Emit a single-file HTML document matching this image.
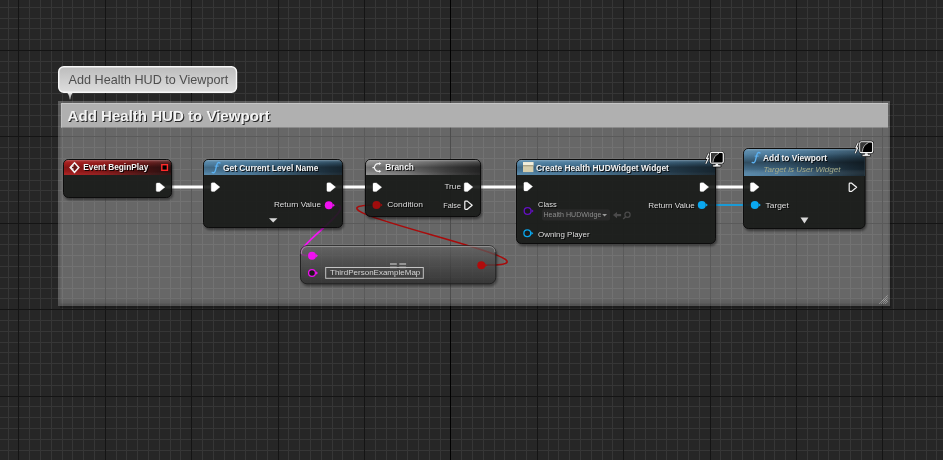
<!DOCTYPE html><html><head><meta charset="utf-8"><style>
html,body{margin:0;padding:0;width:943px;height:460px;overflow:hidden;background:#262626}
body{position:relative;font-family:"Liberation Sans",sans-serif}
svg text{font-family:"Liberation Sans",sans-serif;white-space:pre}
</style></head><body><svg width="943" height="460" style="position:absolute;left:0;top:0" shape-rendering="crispEdges"><rect width="943" height="460" fill="#262626"/><path d="M8 0h1V460h-1Z M29 0h1V460h-1Z M40 0h1V460h-1Z M51 0h1V460h-1Z M62 0h1V460h-1Z M72 0h1V460h-1Z M83 0h1V460h-1Z M94 0h1V460h-1Z M116 0h1V460h-1Z M126 0h1V460h-1Z M137 0h1V460h-1Z M148 0h1V460h-1Z M159 0h1V460h-1Z M170 0h1V460h-1Z M180 0h1V460h-1Z M202 0h1V460h-1Z M213 0h1V460h-1Z M224 0h1V460h-1Z M234 0h1V460h-1Z M245 0h1V460h-1Z M256 0h1V460h-1Z M267 0h1V460h-1Z M288 0h1V460h-1Z M299 0h1V460h-1Z M310 0h1V460h-1Z M321 0h1V460h-1Z M332 0h1V460h-1Z M342 0h1V460h-1Z M353 0h1V460h-1Z M375 0h1V460h-1Z M386 0h1V460h-1Z M396 0h1V460h-1Z M407 0h1V460h-1Z M418 0h1V460h-1Z M429 0h1V460h-1Z M440 0h1V460h-1Z M461 0h1V460h-1Z M472 0h1V460h-1Z M483 0h1V460h-1Z M494 0h1V460h-1Z M504 0h1V460h-1Z M515 0h1V460h-1Z M526 0h1V460h-1Z M548 0h1V460h-1Z M558 0h1V460h-1Z M569 0h1V460h-1Z M580 0h1V460h-1Z M591 0h1V460h-1Z M602 0h1V460h-1Z M612 0h1V460h-1Z M634 0h1V460h-1Z M645 0h1V460h-1Z M656 0h1V460h-1Z M666 0h1V460h-1Z M677 0h1V460h-1Z M688 0h1V460h-1Z M699 0h1V460h-1Z M720 0h1V460h-1Z M731 0h1V460h-1Z M742 0h1V460h-1Z M753 0h1V460h-1Z M764 0h1V460h-1Z M774 0h1V460h-1Z M785 0h1V460h-1Z M807 0h1V460h-1Z M818 0h1V460h-1Z M828 0h1V460h-1Z M839 0h1V460h-1Z M850 0h1V460h-1Z M861 0h1V460h-1Z M872 0h1V460h-1Z M893 0h1V460h-1Z M904 0h1V460h-1Z M915 0h1V460h-1Z M926 0h1V460h-1Z M936 0h1V460h-1Z M0 7H943v1H0Z M0 18H943v1H0Z M0 28H943v1H0Z M0 39H943v1H0Z M0 61H943v1H0Z M0 72H943v1H0Z M0 82H943v1H0Z M0 93H943v1H0Z M0 104H943v1H0Z M0 115H943v1H0Z M0 126H943v1H0Z M0 147H943v1H0Z M0 158H943v1H0Z M0 169H943v1H0Z M0 180H943v1H0Z M0 190H943v1H0Z M0 201H943v1H0Z M0 212H943v1H0Z M0 234H943v1H0Z M0 244H943v1H0Z M0 255H943v1H0Z M0 266H943v1H0Z M0 277H943v1H0Z M0 288H943v1H0Z M0 298H943v1H0Z M0 320H943v1H0Z M0 331H943v1H0Z M0 342H943v1H0Z M0 352H943v1H0Z M0 363H943v1H0Z M0 374H943v1H0Z M0 385H943v1H0Z M0 406H943v1H0Z M0 417H943v1H0Z M0 428H943v1H0Z M0 439H943v1H0Z M0 450H943v1H0Z" fill="#363636"/><path d="M18 0h1V460h-1Z M105 0h1V460h-1Z M191 0h1V460h-1Z M278 0h1V460h-1Z M364 0h1V460h-1Z M537 0h1V460h-1Z M623 0h1V460h-1Z M710 0h1V460h-1Z M796 0h1V460h-1Z M882 0h1V460h-1Z M0 50H943v1H0Z M0 136H943v1H0Z M0 223H943v1H0Z M0 309H943v1H0Z M0 396H943v1H0Z" fill="#141414"/><path d="M450 0h1V460h-1Z" fill="#000000"/></svg><svg width="943" height="460" style="position:absolute;left:0;top:0;will-change:transform"><defs>
<filter id="nsh" color-interpolation-filters="sRGB" x="-10%" y="-10%" width="130%" height="140%"><feGaussianBlur in="SourceAlpha" stdDeviation="1.2"/><feOffset dx="1" dy="1.5"/><feComponentTransfer><feFuncA type="linear" slope="0.5"/></feComponentTransfer><feMerge><feMergeNode/><feMergeNode in="SourceGraphic"/></feMerge></filter>
<filter id="tsh" color-interpolation-filters="sRGB" x="-5%" y="-30%" width="110%" height="160%"><feOffset dx="0.9" dy="0.9" in="SourceAlpha"/><feGaussianBlur stdDeviation="0.3"/><feComponentTransfer><feFuncA type="linear" slope="0.8"/></feComponentTransfer><feMerge><feMergeNode/><feMergeNode in="SourceGraphic"/></feMerge></filter>
<linearGradient id="gEv" x1="0" x2="1" y1="0" y2="0"><stop offset="0" stop-color="#aa1d1d"/><stop offset="0.55" stop-color="#951c1c"/><stop offset="1" stop-color="#6a2a2a"/></linearGradient>
<linearGradient id="gFn" x1="0" x2="1" y1="0" y2="0"><stop offset="0" stop-color="#5487aa"/><stop offset="0.55" stop-color="#4a7a9c"/><stop offset="1" stop-color="#3a5f78"/></linearGradient>
<linearGradient id="gBr" x1="0" x2="1" y1="0" y2="0"><stop offset="0" stop-color="#909090"/><stop offset="0.55" stop-color="#7a7a7a"/><stop offset="1" stop-color="#5a5a5a"/></linearGradient>
<linearGradient id="gDark" x1="0" x2="1" y1="0" y2="0"><stop offset="0" stop-color="#000" stop-opacity="0"/><stop offset="0.35" stop-color="#000" stop-opacity="0.08"/><stop offset="0.7" stop-color="#000" stop-opacity="0.4"/><stop offset="1" stop-color="#000" stop-opacity="0.62"/></linearGradient>
<linearGradient id="gVm" x1="0" x2="0" y1="0" y2="1"><stop offset="0" stop-color="#fff" stop-opacity="0.15"/><stop offset="0.45" stop-color="#fff" stop-opacity="0.8"/><stop offset="1" stop-color="#fff" stop-opacity="1"/></linearGradient>
<mask id="mV" maskContentUnits="objectBoundingBox"><rect width="1" height="1" fill="url(#gVm)"/></mask>
<linearGradient id="gGloss" x1="0" x2="0" y1="0" y2="1"><stop offset="0" stop-color="#fff" stop-opacity="0.3"/><stop offset="0.1" stop-color="#fff" stop-opacity="0.08"/><stop offset="0.25" stop-color="#000" stop-opacity="0.02"/><stop offset="0.5" stop-color="#000" stop-opacity="0.22"/><stop offset="0.8" stop-color="#000" stop-opacity="0.08"/><stop offset="1" stop-color="#fff" stop-opacity="0.03"/></linearGradient>
<linearGradient id="gGloss2" x1="0" x2="0" y1="0" y2="1"><stop offset="0" stop-color="#fff" stop-opacity="0.25"/><stop offset="0.08" stop-color="#fff" stop-opacity="0.05"/><stop offset="0.25" stop-color="#000" stop-opacity="0.1"/><stop offset="0.5" stop-color="#000" stop-opacity="0.42"/><stop offset="0.75" stop-color="#000" stop-opacity="0.2"/><stop offset="1" stop-color="#fff" stop-opacity="0.02"/></linearGradient>
<linearGradient id="gEq" x1="0" x2="0" y1="0" y2="1"><stop offset="0" stop-color="#767676" stop-opacity="0.6"/><stop offset="0.45" stop-color="#525252" stop-opacity="0.62"/><stop offset="1" stop-color="#303030" stop-opacity="0.68"/></linearGradient>
<linearGradient id="gTip" x1="0" x2="0" y1="0" y2="1"><stop offset="0" stop-color="#bcbcbc"/><stop offset="1" stop-color="#dedede"/></linearGradient>
<linearGradient id="gCb" x1="0" x2="0" y1="0" y2="1"><stop offset="0" stop-color="#000" stop-opacity="0"/><stop offset="1" stop-color="#000" stop-opacity="0.12"/></linearGradient>
<linearGradient id="gPtr" x1="0" x2="0" y1="0" y2="1"><stop offset="0" stop-color="#f0f0f0"/><stop offset="1" stop-color="#8a8a8a"/></linearGradient>
</defs><path d="M60 306 H890 V103 H891.5 V308 H60 Z" fill="#000" fill-opacity="0.22"/><rect x="58" y="101" width="832" height="205" fill="#fff" fill-opacity="0.25"/><rect x="60.5" y="103" width="828" height="200.5" fill="#fff" fill-opacity="0.07"/><rect x="58" y="296" width="832" height="10" fill="url(#gCb)"/><rect x="61" y="103" width="827" height="24.5" fill="#b0b0b0"/><rect x="61" y="103" width="827" height="1" fill="#c6c6c6"/><rect x="61" y="103" width="1" height="24.5" fill="#c0c0c0"/><text x="67.60" y="121.00" font-size="14.8" font-weight="bold" font-style="normal" textLength="202.12" lengthAdjust="spacingAndGlyphs" fill="#f4f4f4" filter="url(#tsh)">Add Health HUD to Viewport</text><path d="M879.5 303.5L887.5 295.5M881.5 303.5L887.5 297.5M883.5 303.5L887.5 299.5M885.5 303.5L887.5 301.5" stroke="#c4c4c4" stroke-width="0.9" stroke-dasharray="1.1 0.7"/><rect x="58.7" y="66.7" width="177.8" height="25.6" rx="5" fill="url(#gTip)" stroke="#f8f8f8" stroke-width="1.4"/><path d="M66 92.6 Q69 93 69.6 99.4 H70.4 Q71 93 74 92.6 Z" fill="url(#gPtr)"/><text x="68.60" y="83.80" font-size="12.1" font-weight="normal" font-style="normal" textLength="159.60" lengthAdjust="spacingAndGlyphs" fill="#4e4e4e" >Add Health HUD to Viewport</text><path d="M164 187 H211" stroke="#fff" stroke-width="3" fill="none" stroke-opacity="1"/><path d="M335 187 H373" stroke="#fff" stroke-width="3" fill="none" stroke-opacity="1"/><path d="M472 187 H524" stroke="#fff" stroke-width="3" fill="none" stroke-opacity="1"/><path d="M708 187 H751" stroke="#fff" stroke-width="3" fill="none" stroke-opacity="1"/><path d="M707 205 H751" stroke="#1a9ad6" stroke-width="2" fill="none" stroke-opacity="1"/><path d="M334 205 C 364 205, 277.5 255.6, 307.5 255.6" stroke="#f414f4" stroke-width="1.8" fill="none" stroke-opacity="1"/><path d="M487 265 C 587 265, 277 205, 377 205" stroke="#a80b0b" stroke-width="1.6" fill="none" stroke-opacity="1"/><rect x="63.5" y="159.5" width="108.0" height="38.0" rx="5" fill="#1a1c1a" fill-opacity="0.86" stroke="#0c0c0c" stroke-width="1" filter="url(#nsh)"/><path d="M64.0 175 V164.5 Q64.0 160.0 68.5 160.0 H166.5 Q171.0 160.0 171.0 164.5 V175 Z" fill="url(#gEv)"/><path d="M64.0 175 V164.5 Q64.0 160.0 68.5 160.0 H166.5 Q171.0 160.0 171.0 164.5 V175 Z" fill="url(#gDark)" mask="url(#mV)"/><path d="M64.0 175 V164.5 Q64.0 160.0 68.5 160.0 H166.5 Q171.0 160.0 171.0 164.5 V175 Z" fill="url(#gGloss)"/><rect x="203.5" y="159.5" width="139.0" height="68.0" rx="5" fill="#1a1c1a" fill-opacity="0.86" stroke="#0c0c0c" stroke-width="1" filter="url(#nsh)"/><path d="M204.0 175 V164.5 Q204.0 160.0 208.5 160.0 H337.5 Q342.0 160.0 342.0 164.5 V175 Z" fill="url(#gFn)"/><path d="M204.0 175 V164.5 Q204.0 160.0 208.5 160.0 H337.5 Q342.0 160.0 342.0 164.5 V175 Z" fill="url(#gDark)" mask="url(#mV)"/><path d="M204.0 175 V164.5 Q204.0 160.0 208.5 160.0 H337.5 Q342.0 160.0 342.0 164.5 V175 Z" fill="url(#gGloss)"/><rect x="365.5" y="159.5" width="115.0" height="57.0" rx="5" fill="#1a1c1a" fill-opacity="0.86" stroke="#0c0c0c" stroke-width="1" filter="url(#nsh)"/><path d="M366.0 175 V164.5 Q366.0 160.0 370.5 160.0 H475.5 Q480.0 160.0 480.0 164.5 V175 Z" fill="url(#gBr)"/><path d="M366.0 175 V164.5 Q366.0 160.0 370.5 160.0 H475.5 Q480.0 160.0 480.0 164.5 V175 Z" fill="url(#gDark)" mask="url(#mV)"/><path d="M366.0 175 V164.5 Q366.0 160.0 370.5 160.0 H475.5 Q480.0 160.0 480.0 164.5 V175 Z" fill="url(#gGloss)"/><rect x="516.5" y="159.5" width="199.0" height="84.0" rx="5" fill="#1a1c1a" fill-opacity="0.86" stroke="#0c0c0c" stroke-width="1" filter="url(#nsh)"/><path d="M517.0 175 V164.5 Q517.0 160.0 521.5 160.0 H710.5 Q715.0 160.0 715.0 164.5 V175 Z" fill="url(#gFn)"/><path d="M517.0 175 V164.5 Q517.0 160.0 521.5 160.0 H710.5 Q715.0 160.0 715.0 164.5 V175 Z" fill="url(#gDark)" mask="url(#mV)"/><path d="M517.0 175 V164.5 Q517.0 160.0 521.5 160.0 H710.5 Q715.0 160.0 715.0 164.5 V175 Z" fill="url(#gGloss)"/><rect x="743.5" y="148.5" width="121.5" height="80.0" rx="5" fill="#1a1c1a" fill-opacity="0.86" stroke="#0c0c0c" stroke-width="1" filter="url(#nsh)"/><path d="M744.0 176 V153.5 Q744.0 149.0 748.5 149.0 H860 Q864.5 149.0 864.5 153.5 V176 Z" fill="url(#gFn)"/><path d="M744.0 176 V153.5 Q744.0 149.0 748.5 149.0 H860 Q864.5 149.0 864.5 153.5 V176 Z" fill="url(#gDark)" mask="url(#mV)"/><path d="M744.0 176 V153.5 Q744.0 149.0 748.5 149.0 H860 Q864.5 149.0 864.5 153.5 V176 Z" fill="url(#gGloss2)"/><rect x="300.5" y="245.8" width="195.3" height="38" rx="6.5" fill="url(#gEq)" stroke="#222" stroke-width="1" filter="url(#nsh)"/><path d="M301.2 254 Q301.2 246.5 307.5 246.5 H489 Q495 246.5 495 252" fill="none" stroke="#c0c0c0" stroke-opacity="0.55" stroke-width="1"/><text x="83.30" y="170.30" font-size="9.4" font-weight="bold" font-style="normal" textLength="65.01" lengthAdjust="spacingAndGlyphs" fill="#f2f2f2" filter="url(#tsh)">Event BeginPlay</text><text x="223.00" y="170.50" font-size="9.4" font-weight="bold" font-style="normal" textLength="95.38" lengthAdjust="spacingAndGlyphs" fill="#f2f2f2" filter="url(#tsh)">Get Current Level Name</text><text x="385.20" y="170.40" font-size="9.4" font-weight="bold" font-style="normal" textLength="28.70" lengthAdjust="spacingAndGlyphs" fill="#f2f2f2" filter="url(#tsh)">Branch</text><text x="536.00" y="170.50" font-size="9.4" font-weight="bold" font-style="normal" textLength="132.92" lengthAdjust="spacingAndGlyphs" fill="#f2f2f2" filter="url(#tsh)">Create Health HUDWidget Widget</text><text x="763.00" y="160.90" font-size="9.4" font-weight="bold" font-style="normal" textLength="63.98" lengthAdjust="spacingAndGlyphs" fill="#f2f2f2" filter="url(#tsh)">Add to Viewport</text><text x="763.40" y="171.60" font-size="7.2" font-weight="normal" font-style="italic" textLength="77.11" lengthAdjust="spacingAndGlyphs" fill="#a8ae8c" >Target is User Widget</text><text x="273.90" y="207.00" font-size="7.2" font-weight="normal" font-style="normal" textLength="47.08" lengthAdjust="spacingAndGlyphs" fill="#dedede" filter="url(#tsh)">Return Value</text><text x="387.20" y="207.20" font-size="7.2" font-weight="normal" font-style="normal" textLength="35.80" lengthAdjust="spacingAndGlyphs" fill="#dedede" filter="url(#tsh)">Condition</text><text x="444.40" y="188.90" font-size="7.2" font-weight="normal" font-style="normal" textLength="16.59" lengthAdjust="spacingAndGlyphs" fill="#dedede" filter="url(#tsh)">True</text><text x="443.20" y="208.00" font-size="7.2" font-weight="normal" font-style="normal" textLength="17.80" lengthAdjust="spacingAndGlyphs" fill="#dedede" filter="url(#tsh)">False</text><text x="538.00" y="207.00" font-size="7.2" font-weight="normal" font-style="normal" textLength="18.70" lengthAdjust="spacingAndGlyphs" fill="#dedede" filter="url(#tsh)">Class</text><text x="648.20" y="207.50" font-size="7.2" font-weight="normal" font-style="normal" textLength="46.58" lengthAdjust="spacingAndGlyphs" fill="#dedede" filter="url(#tsh)">Return Value</text><text x="538.00" y="236.50" font-size="7.2" font-weight="normal" font-style="normal" textLength="51.59" lengthAdjust="spacingAndGlyphs" fill="#dedede" filter="url(#tsh)">Owning Player</text><text x="765.60" y="208.00" font-size="7.2" font-weight="normal" font-style="normal" textLength="23.19" lengthAdjust="spacingAndGlyphs" fill="#dedede" filter="url(#tsh)">Target</text><path d="M157.2 182.9 H159.6 L164.89999999999998 187.20000000000002 L159.6 191.5 H157.2 Q156.2 191.5 156.2 190.5 V183.9 Q156.2 182.9 157.2 182.9 Z" fill="#fff" stroke="#fff" stroke-width="0.3" stroke-linejoin="round"/><path d="M212.2 182.8 H214.6 L219.89999999999998 187.10000000000002 L214.6 191.4 H212.2 Q211.2 191.4 211.2 190.4 V183.8 Q211.2 182.8 212.2 182.8 Z" fill="#fff" stroke="#fff" stroke-width="0.3" stroke-linejoin="round"/><path d="M327.9 182.8 H330.29999999999995 L335.59999999999997 187.10000000000002 L330.29999999999995 191.4 H327.9 Q326.9 191.4 326.9 190.4 V183.8 Q326.9 182.8 327.9 182.8 Z" fill="#fff" stroke="#fff" stroke-width="0.3" stroke-linejoin="round"/><path d="M374 182.9 H376.4 L381.7 187.20000000000002 L376.4 191.5 H374 Q373 191.5 373 190.5 V183.9 Q373 182.9 374 182.9 Z" fill="#fff" stroke="#fff" stroke-width="0.3" stroke-linejoin="round"/><path d="M465.2 182.8 H467.59999999999997 L472.9 187.10000000000002 L467.59999999999997 191.4 H465.2 Q464.2 191.4 464.2 190.4 V183.8 Q464.2 182.8 465.2 182.8 Z" fill="#fff" stroke="#fff" stroke-width="0.3" stroke-linejoin="round"/><path d="M465.5 201.1 H467.29999999999995 L472.2 205.2 L467.29999999999995 209.3 H465.5 Q464.8 209.3 464.8 208.6 V201.8 Q464.8 201.1 465.5 201.1 Z" fill="none" stroke="#f4f4f4" stroke-width="1.2" stroke-linejoin="round"/><path d="M524.9 182.3 H527.3 L532.6 186.60000000000002 L527.3 190.9 H524.9 Q523.9 190.9 523.9 189.9 V183.3 Q523.9 182.3 524.9 182.3 Z" fill="#fff" stroke="#fff" stroke-width="0.3" stroke-linejoin="round"/><path d="M701 182.8 H703.4 L708.7 187.10000000000002 L703.4 191.4 H701 Q700 191.4 700 190.4 V183.8 Q700 182.8 701 182.8 Z" fill="#fff" stroke="#fff" stroke-width="0.3" stroke-linejoin="round"/><path d="M751.4 182.8 H753.8 L759.1 187.10000000000002 L753.8 191.4 H751.4 Q750.4 191.4 750.4 190.4 V183.8 Q750.4 182.8 751.4 182.8 Z" fill="#fff" stroke="#fff" stroke-width="0.3" stroke-linejoin="round"/><path d="M849.9 183.2 H851.7 L856.6 187.29999999999998 L851.7 191.4 H849.9 Q849.2 191.4 849.2 190.7 V183.9 Q849.2 183.2 849.9 183.2 Z" fill="none" stroke="#f4f4f4" stroke-width="1.2" stroke-linejoin="round"/><circle cx="328.8" cy="205.3" r="4" fill="#f010f0"/><path d="M332.8 203.5 L334.8 205.3 L332.8 207.10000000000002 Z" fill="#f010f0"/><circle cx="376.5" cy="205" r="4" fill="#a00d0d"/><path d="M380.5 203.2 L382.5 205 L380.5 206.8 Z" fill="#a00d0d"/><circle cx="701.8" cy="205" r="4" fill="#0aa8f0"/><path d="M705.8 203.2 L707.8 205 L705.8 206.8 Z" fill="#0aa8f0"/><circle cx="754.8" cy="205" r="4" fill="#0aa8f0"/><path d="M758.8 203.2 L760.8 205 L758.8 206.8 Z" fill="#0aa8f0"/><circle cx="527.6" cy="211" r="3.4" fill="#1a1a1a" stroke="#6410c4" stroke-width="1.3"/><path d="M531.6 209.2 L533.6 211 L531.6 212.8 Z" fill="#6410c4"/><circle cx="527.3" cy="233.3" r="3.4" fill="#1a1a1a" stroke="#0aa8f0" stroke-width="1.3"/><path d="M531.3 231.5 L533.3 233.3 L531.3 235.10000000000002 Z" fill="#0aa8f0"/><circle cx="312" cy="255.7" r="4" fill="#f010f0"/><path d="M316 253.89999999999998 L318 255.7 L316 257.5 Z" fill="#f010f0"/><circle cx="312" cy="273" r="3.4" fill="#1a1a1a" stroke="#f010f0" stroke-width="1.3"/><path d="M316 271.2 L318 273 L316 274.8 Z" fill="#f010f0"/><circle cx="481.3" cy="265.2" r="4" fill="#b00c0c"/><path d="M485.3 263.4 L487.3 265.2 L485.3 267.0 Z" fill="#b00c0c"/><rect x="161.8" y="164.7" width="5.6" height="5.6" fill="#000" stroke="#ff2a2a" stroke-width="1.4"/><path d="M269 218.2 H277.4 L273.2 222.4 Z" fill="#d8d8d8"/><path d="M800.5 217.6 H808.4 L804.45 223.4 Z" fill="#d8d8d8"/><path d="M74.5 162.8 L78.8 167.5 L74.5 172.3 L70.2 167.5 Z" fill="#6a1414" stroke="#f4f4f4" stroke-width="1.5" stroke-linejoin="miter"/><path d="M70.8 167.5 L73.4 164.6 V170.4 Z" fill="#f4f4f4"/><path d="M72 166.7 H74 V165.2 L76.6 167.5 L74 169.8 V168.3 H72 Z" fill="#6a1414"/><path d="M220 163.0 C 218.8 161.89999999999998, 217.4 162.6, 216.9 164.6 L 215.3 170.79999999999998 C 214.8 172.6, 213.4 173.2, 212.2 172.39999999999998" fill="none" stroke="#5cb2f2" stroke-width="1.35" stroke-linecap="round"/><path d="M214.7 166.1 H218.6" stroke="#5cb2f2" stroke-width="1"/><path d="M760 153.0 C 758.8 151.89999999999998, 757.4 152.6, 756.9 154.6 L 755.3 160.79999999999998 C 754.8 162.6, 753.4 163.2, 752.2 162.39999999999998" fill="none" stroke="#5cb2f2" stroke-width="1.35" stroke-linecap="round"/><path d="M754.7 156.1 H758.6" stroke="#5cb2f2" stroke-width="1"/><path d="M372.4 167.5 H374.2 Q375.4 163.6 378.2 163.6 H379.6 M374.2 167.5 Q375.4 171.3 378.2 171.3 H379.6" fill="none" stroke="#f2f2f2" stroke-width="1.25" stroke-linejoin="round"/><path d="M379 162.2 L381.4 163.6 L379 165 Z M379 169.9 L381.4 171.3 L379 172.7 Z" fill="#f2f2f2"/><rect x="523" y="162.1" width="10.4" height="10" fill="#d6ceac"/><rect x="523" y="162.1" width="10.4" height="3.3" fill="#f2eedc"/><rect x="523" y="165.4" width="10.4" height="0.8" fill="#8a8468"/><path d="M708.9 153.4 L706.5 158.4 L708.3 158.4 L705.8 163.8" fill="none" stroke="#000" stroke-opacity="0.7" stroke-width="2.4" stroke-linejoin="round"/><path d="M708.9 153.4 L706.5 158.4 L708.3 158.4 L705.8 163.8" fill="none" stroke="#eeeeee" stroke-width="1.2" stroke-linejoin="round"/><rect x="709.4" y="151.4" width="14.9" height="12.8" rx="2.2" fill="#000"/><path d="M715.1999999999999 163.4 H718.5999999999999 V164.8 H721.0 V167.0 H712.6999999999999 V164.8 H715.1999999999999 Z" fill="#f4f4f4" stroke="#000" stroke-width="0.7"/><rect x="710.4" y="152.4" width="12.9" height="10.8" rx="1.6" fill="#000" stroke="#f6f6f6" stroke-width="1.2"/><path d="M711.0999999999999 153.10000000000002 H719.0 Q713.4 155.4 712.6999999999999 162.5 H711.0999999999999 Z" fill="#383838"/><path d="M719.0 153.3 Q713.5999999999999 155.60000000000002 712.9 162.4" fill="none" stroke="#d8d8d8" stroke-width="0.8"/><path d="M858.3000000000001 142.79999999999998 L855.9000000000001 147.79999999999998 L857.7 147.79999999999998 L855.2 153.2" fill="none" stroke="#000" stroke-opacity="0.7" stroke-width="2.4" stroke-linejoin="round"/><path d="M858.3000000000001 142.79999999999998 L855.9000000000001 147.79999999999998 L857.7 147.79999999999998 L855.2 153.2" fill="none" stroke="#eeeeee" stroke-width="1.2" stroke-linejoin="round"/><rect x="858.8000000000001" y="140.79999999999998" width="14.9" height="12.8" rx="2.2" fill="#000"/><path d="M864.6 152.79999999999998 H868.0 V154.2 H870.4000000000001 V156.39999999999998 H862.1 V154.2 H864.6 Z" fill="#f4f4f4" stroke="#000" stroke-width="0.7"/><rect x="859.8000000000001" y="141.79999999999998" width="12.9" height="10.8" rx="1.6" fill="#000" stroke="#f6f6f6" stroke-width="1.2"/><path d="M860.5 142.5 H868.4000000000001 Q862.8000000000001 144.79999999999998 862.1 151.89999999999998 H860.5 Z" fill="#383838"/><path d="M868.4000000000001 142.7 Q863.0 145.0 862.3000000000001 151.79999999999998" fill="none" stroke="#d8d8d8" stroke-width="0.8"/><g fill="#a8a8a8"><rect x="390" y="263.2" width="6.8" height="1.6"/><rect x="390" y="266.6" width="6.8" height="1.6"/><rect x="399.3" y="263.2" width="6.8" height="1.6"/><rect x="399.3" y="266.6" width="6.8" height="1.6"/></g><rect x="325.7" y="267.5" width="97.6" height="10.8" fill="none" stroke="#c4c4c4" stroke-width="1"/><text x="330.00" y="275.20" font-size="7" font-weight="normal" font-style="normal" textLength="90.29" lengthAdjust="spacingAndGlyphs" fill="#d4d4d4" >ThirdPersonExampleMap</text><rect x="542" y="209.2" width="68" height="11.4" rx="2" fill="#2c2c2c" fill-opacity="0.8"/><text x="543.50" y="217.00" font-size="7" font-weight="normal" font-style="normal" textLength="57.90" lengthAdjust="spacingAndGlyphs" fill="#8c8c8c" >Health HUDWidge</text><path d="M602.2 214 H607 L604.6 216.6 Z" fill="#9a9a9a"/><path d="M613 215.1 L617 211.9 V213.9 H621.1 V216.3 H617 V218.3 Z" fill="#4a4a4a"/><circle cx="627.5" cy="214.8" r="2.6" fill="none" stroke="#4a4a4a" stroke-width="1.2"/><path d="M625.6 216.8 L623.2 219" stroke="#4a4a4a" stroke-width="1.4"/></svg></body></html>
